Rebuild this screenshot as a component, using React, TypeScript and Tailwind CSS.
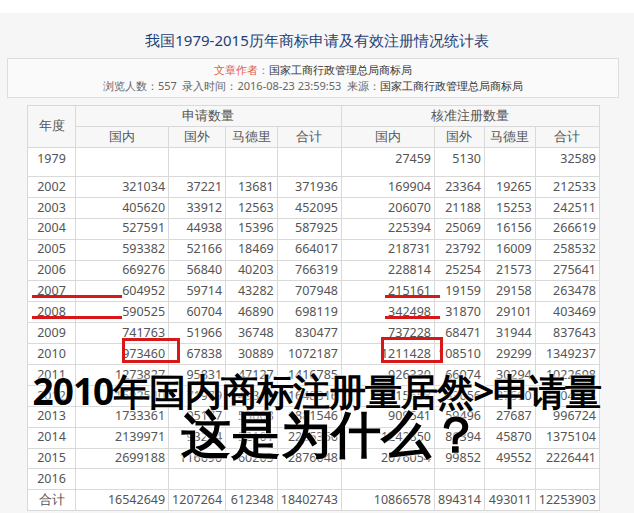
const rows: [string, ...string[]][] = [
  ["2002", "321034", "37221", "13681", "371936", "169904", "23364", "19265", "212533"],
  ["2003", "405620", "33912", "12563", "452095", "206070", "21188", "15253", "242511"],
  ["2004", "527591", "44938", "15396", "587925", "225394", "25069", "16156", "266619"],
  ["2005", "593382", "52166", "18469", "664017", "218731", "23792", "16009", "258532"],
  ["2006", "669276", "56840", "40203", "766319", "228814", "25254", "21573", "275641"],
  ["2007", "604952", "59714", "43282", "707948", "215161", "19159", "29158", "263478"],
  ["2008", "590525", "60704", "46890", "698119", "342498", "31870", "29101", "403469"],
  ["2009", "741763", "51966", "36748", "830477", "737228", "68471", "31944", "837643"],
  ["2010", "973460", "67838", "30889", "1072187", "1211428", "108510", "29299", "1349237"],
  ["2011", "1273827", "95831", "47127", "1416785", "926330", "66074", "30294", "1022698"],
  ["2012", "1502540", "71979", "49312", "1648316", "915658", "83656", "27590", "1004864"],
  ["2013", "1733361", "95177", "53008", "1881546", "909541", "59496", "27687", "996724"],
  ["2014", "2139971", "93284", "52101", "2285356", "1242850", "86394", "45870", "1375104"],
  ["2015", "2699188", "116690", "60205", "2876048", "2076054", "99852", "49552", "2226441"],
  ["2016", "", "", "", "", "", "", "", ""],
];

const cell = "border border-[#d9d9d9] px-[3px]";

export default function App() {
  return (
    <div className="relative w-[634px] h-[513px] bg-white overflow-hidden text-[#555] [font-family:'Noto_Sans_CJK_SC',sans-serif]">
      <div className="mt-[13px] h-[500px] bg-[#f6f6f6] px-[7px]">
        <h1 className="pt-[20px] text-center text-[15px] text-[#1f3f77] leading-none">
          我国1979-2015历年商标申请及有效注册情况统计表
        </h1>
        <div className="mt-[10px] border border-[#ddd] bg-[#fafafa] text-center text-[11px] leading-[16px] py-[3px] mr-[8px]">
          <div>
            <span className="text-[#e0604a]">文章作者：</span>
            <span className="text-[#333]">国家工商行政管理总局商标局</span>
          </div>
          <div className="text-[#666]">
            浏览人数：557&nbsp; 录入时间：2016-08-23 23:59:53&nbsp; 来源：
            <span className="text-[#333]">国家工商行政管理总局商标局</span>
          </div>
        </div>
        <table className="mt-[7px] ml-[20px] w-[573px] border-collapse bg-white text-[12.5px] tabular-nums">
          <colgroup>
            <col className="w-[51px]" />
            <col className="w-[100px]" />
            <col className="w-[50px]" />
            <col className="w-[52px]" />
            <col className="w-[60px]" />
            <col className="w-[100px]" />
            <col className="w-[50px]" />
            <col className="w-[51px]" />
            <col className="w-[59px]" />
          </colgroup>
          <thead className="bg-[#f7f7f7]">
            <tr className="h-[21px]">
              <th rowSpan={2} className={cell + " font-normal"}>年度</th>
              <th colSpan={4} className={cell + " font-normal"}>申请数量</th>
              <th colSpan={4} className={cell + " font-normal"}>核准注册数量</th>
            </tr>
            <tr className="h-[21px]">
              {["国内", "国外", "马德里", "合计", "国内", "国外", "马德里", "合计"].map((h, i) => (
                <th key={i} className={cell + " font-normal"}>{h}</th>
              ))}
            </tr>
          </thead>
          <tbody>
            <tr className="h-[29px] align-top">
              <td className={cell + " text-center pt-[2px]"}>1979</td>
              <td className={cell}></td><td className={cell}></td><td className={cell}></td><td className={cell}></td>
              <td className={cell + " text-right pt-[2px]"}>27459</td>
              <td className={cell + " text-right pt-[2px]"}>5130</td>
              <td className={cell}></td>
              <td className={cell + " text-right pt-[2px]"}>32589</td>
            </tr>
            {[...rows, ["合计", "16542649", "1207264", "612348", "18402743", "10866578", "894314", "493011", "12253903"]].map((r) => (
              <tr key={r[0]} className="h-[20.9px] leading-none">
                {r.map((v, i) => (
                  <td key={i} className={cell + (i === 0 ? " text-center" : " text-right")}>{v}</td>
                ))}
              </tr>
            ))}
          </tbody>
        </table>
      </div>

      {/* annotations */}
      <div className="absolute left-[32px] top-[295px] w-[90px] h-[3px] bg-[#d81818]" />
      <div className="absolute left-[32px] top-[316px] w-[90px] h-[3px] bg-[#d81818]" />
      <div className="absolute left-[385px] top-[295px] w-[55px] h-[3px] bg-[#d81818]" />
      <div className="absolute left-[385px] top-[316px] w-[55px] h-[3px] bg-[#d81818]" />
      <div className="absolute left-[122px] top-[338px] w-[58px] h-[25px] border-[3px] border-[#d81818]" />
      <div className="absolute left-[381px] top-[337px] w-[62px] h-[26px] border-[3px] border-[#d81818]" />

      <div className="absolute left-0 top-[372px] w-[634px] text-center font-bold text-black text-[37px] leading-none tracking-[-1px] [text-shadow:0_0_3px_white,0_0_3px_white]">
        2010年国内商标注册量居然&gt;申请量
      </div>
      <div className="absolute left-[14px] top-[408px] w-[634px] text-center font-bold text-black text-[50px] leading-none [text-shadow:0_0_3px_white,0_0_3px_white]">
        这是为什么？
      </div>
    </div>
  );
}
